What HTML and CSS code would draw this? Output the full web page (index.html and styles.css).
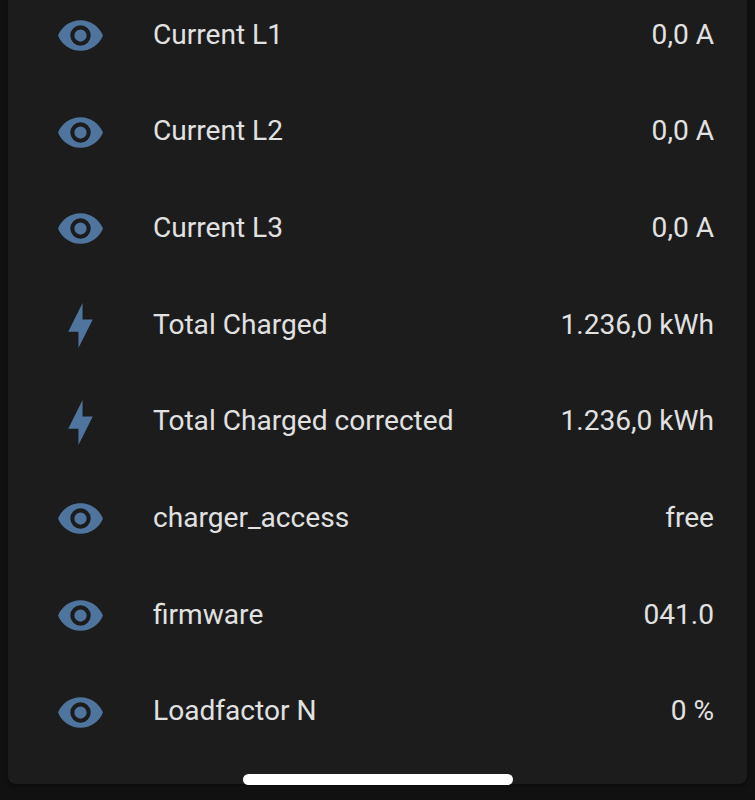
FILE: index.html
```html
<!DOCTYPE html>
<html lang="en">
  <head>
    <meta charset="UTF-8" />
    <meta name="viewport" content="width=device-width, initial-scale=1.0" />
    <title>Charger</title>
    <link rel="stylesheet" href="styles.css">
  </head>
  <body>
    <svg class="sprite" width="0" height="0">
      <symbol id="eye" viewBox="0 0 24 24">
        <path d="M12,9A3,3 0 0,0 9,12A3,3 0 0,0 12,15A3,3 0 0,0 15,12A3,3 0 0,0 12,9M12,17A5,5 0 0,1 7,12A5,5 0 0,1 12,7A5,5 0 0,1 17,12A5,5 0 0,1 12,17M12,4.5C7,4.5 2.73,7.61 1,12C2.73,16.39 7,19.5 12,19.5C17,19.5 21.27,16.39 23,12C21.27,7.61 17,4.5 12,4.5Z" />
      </symbol>
      <symbol id="flash" viewBox="0 0 24 24">
        <path d="M11 15H6L13 1V9H18L11 23V15Z" />
      </symbol>
    </svg>

    <div class="card">
      <div class="row">
        <svg class="icon"><use href="#eye" /></svg>
        <span class="name">Current L1</span>
        <span class="state">0,0 A</span>
      </div>
      <div class="row">
        <svg class="icon"><use href="#eye" /></svg>
        <span class="name">Current L2</span>
        <span class="state">0,0 A</span>
      </div>
      <div class="row">
        <svg class="icon"><use href="#eye" /></svg>
        <span class="name">Current L3</span>
        <span class="state">0,0 A</span>
      </div>
      <div class="row">
        <svg class="icon"><use href="#flash" /></svg>
        <span class="name">Total Charged</span>
        <span class="state">1.236,0 kWh</span>
      </div>
      <div class="row">
        <svg class="icon"><use href="#flash" /></svg>
        <span class="name">Total Charged corrected</span>
        <span class="state">1.236,0 kWh</span>
      </div>
      <div class="row">
        <svg class="icon"><use href="#eye" /></svg>
        <span class="name">charger_access</span>
        <span class="state">free</span>
      </div>
      <div class="row">
        <svg class="icon"><use href="#eye" /></svg>
        <span class="name">firmware</span>
        <span class="state">041.0</span>
      </div>
      <div class="row">
        <svg class="icon"><use href="#eye" /></svg>
        <span class="name">Loadfactor N</span>
        <span class="state">0 %</span>
      </div>
    </div>

    <div class="home-bar"></div>
  </body>
</html>
```
FILE: styles.css
```css
body {
  margin: 0;
  height: 800px;
  overflow: hidden;
  background: #111111;
  color: #e1e1e1;
  font-family: Roboto, sans-serif;
  font-size: 28.1px;
}

.sprite {
  display: block;
}

.card {
  box-sizing: border-box;
  height: 784px;
  margin: 0 8px;
  background: #1c1c1c;
  border-radius: 0 0 8px 8px;
  box-shadow: 0 2px 4px rgba(0, 0, 0, 0.4);
  overflow: hidden;
}

.row {
  display: flex;
  align-items: center;
  box-sizing: border-box;
  height: 96.7px;
  padding: 0 33px 0 48px;
}

.row:first-child {
  margin-top: -14.2px;
}

.icon {
  width: 49px;
  height: 49px;
  margin-top: 2.5px;
  fill: #4f749e;
}

.name {
  flex: 1;
  margin-left: 48px;
}

.home-bar {
  position: absolute;
  left: 243px;
  top: 774px;
  width: 270px;
  height: 11px;
  border-radius: 6px;
  background: #ffffff;
}
```
